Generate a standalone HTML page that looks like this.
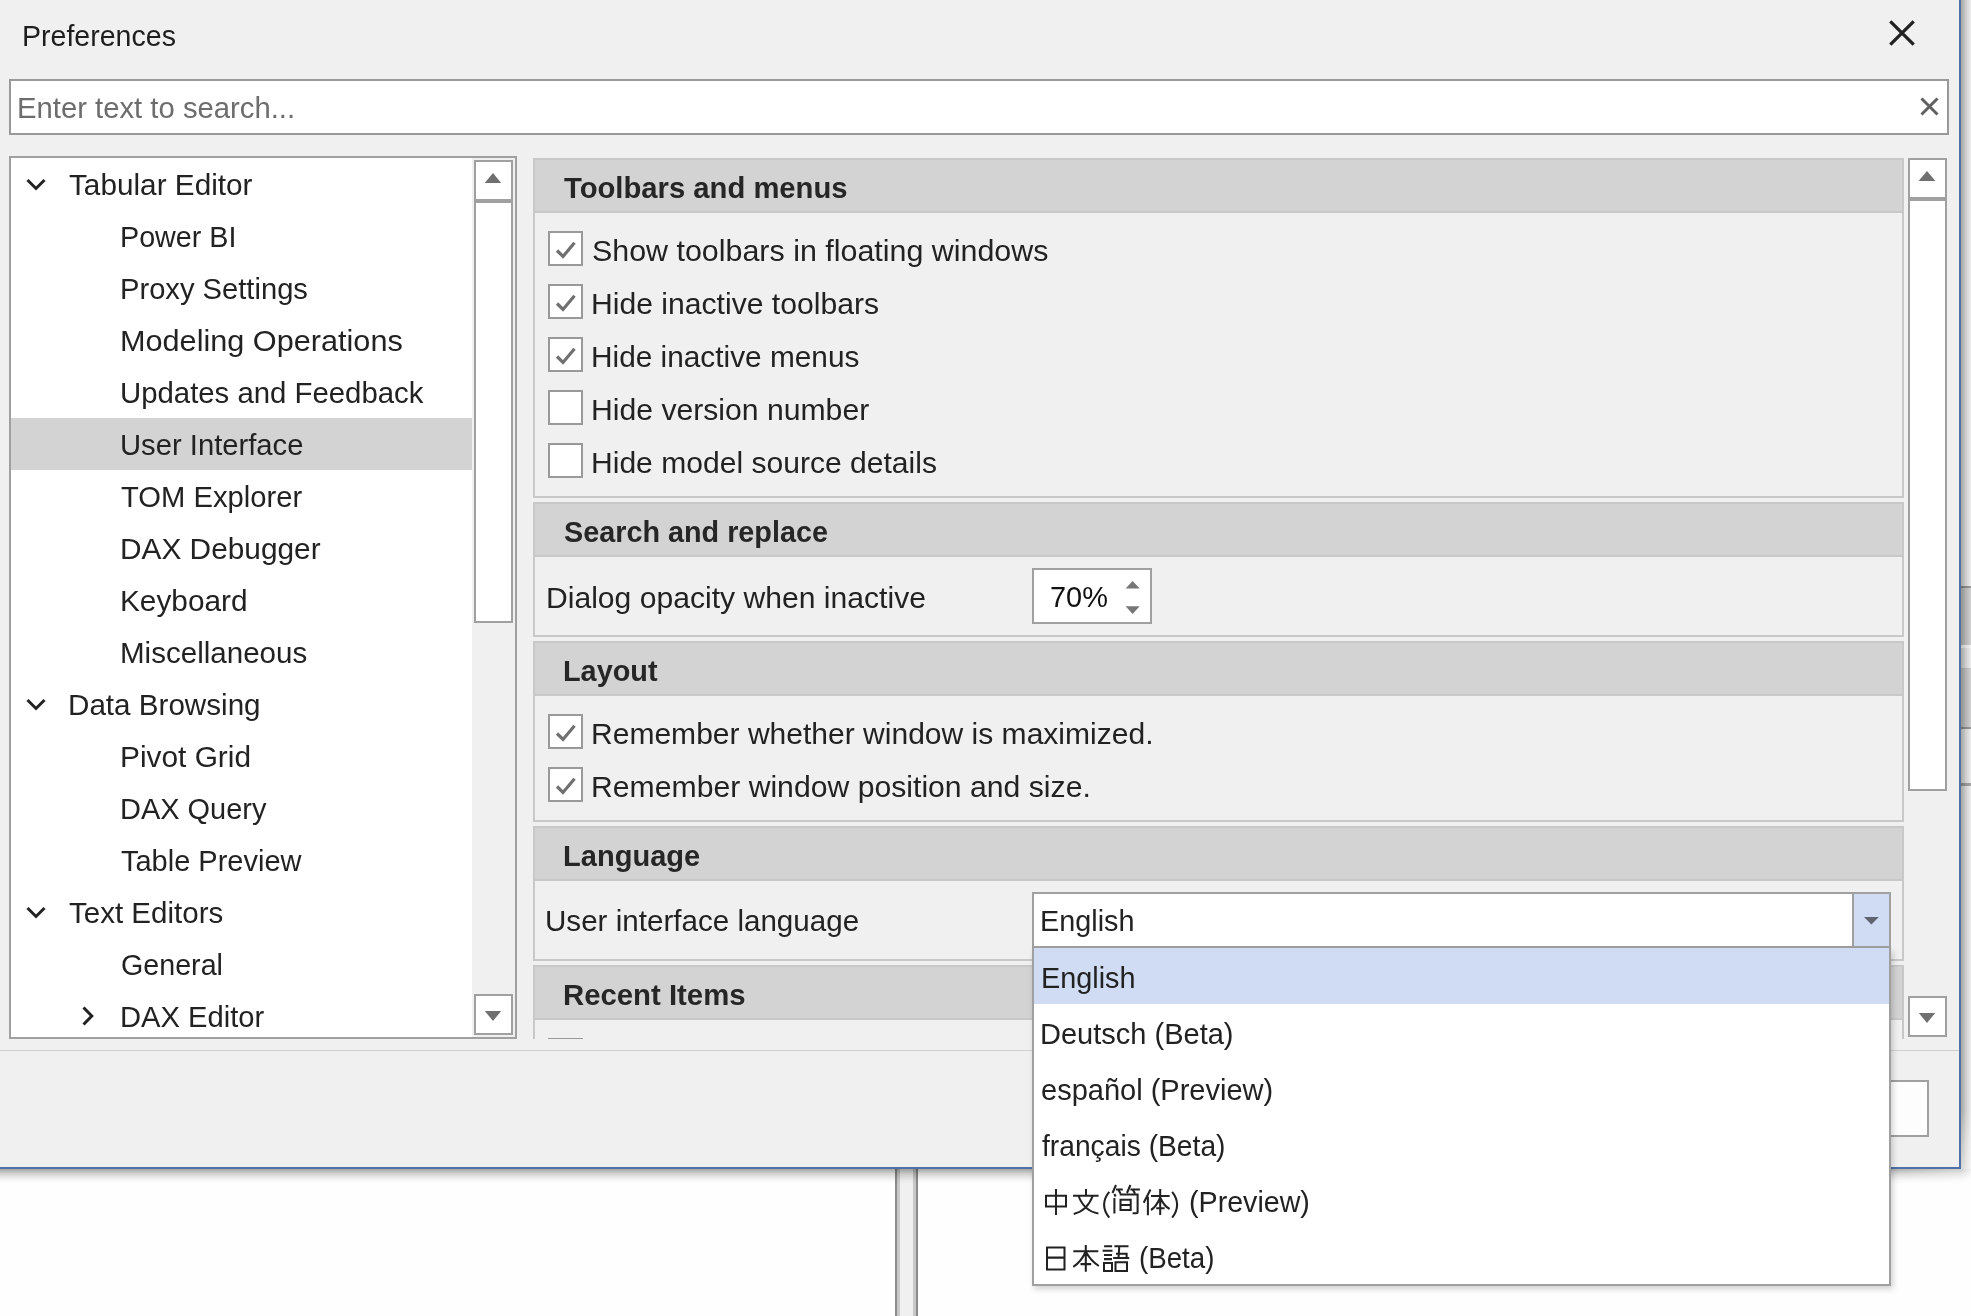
<!DOCTYPE html>
<html><head><meta charset="utf-8"><title>Preferences</title>
<style>
html,body{margin:0;padding:0;}
body{width:1971px;height:1316px;position:relative;overflow:hidden;background:#fdfdfd;font-family:"Liberation Sans",sans-serif;}
.r{position:absolute;box-sizing:content-box;}
.t{position:absolute;white-space:pre;}
</style></head><body>
<div class="r" style="left:0px;top:0px;width:1959px;height:1167px;background:#f0f0f0;"></div>
<div class="r" style="left:0px;top:1169px;width:1971px;height:147px;background:#fefefe;"></div>
<div class="r" style="left:895px;top:1169px;width:2px;height:147px;background:#8a8a8a;"></div>
<div class="r" style="left:897px;top:1169px;width:3px;height:147px;background:#c8c8c8;"></div>
<div class="r" style="left:900px;top:1169px;width:13px;height:147px;background:#f0f0f0;"></div>
<div class="r" style="left:913px;top:1169px;width:3px;height:147px;background:#c8c8c8;"></div>
<div class="r" style="left:916px;top:1169px;width:2px;height:147px;background:#8a8a8a;"></div>
<div class="r" style="left:0px;top:1169px;width:1971px;height:16px;background:linear-gradient(rgba(0,0,0,0.34) 0px,rgba(0,0,0,0.275) 2px,rgba(0,0,0,0.19) 4px,rgba(0,0,0,0.137) 6px,rgba(0,0,0,0.09) 8px,rgba(0,0,0,0.05) 10px,rgba(0,0,0,0.02) 12px,rgba(0,0,0,0) 15px);-webkit-mask-image:linear-gradient(90deg,#000 1880px,rgba(0,0,0,0.55) 1961px,rgba(0,0,0,0.15) 1971px)"></div>
<div class="r" style="left:1961px;top:0px;width:10px;height:1169px;background:linear-gradient(90deg,#a8a8a6,#bdbdbd 30%,#d0d0d0 50%,#dedede 75%,#eeeeee);-webkit-mask-image:linear-gradient(#000 1110px,rgba(0,0,0,0.45) 1169px)"></div>
<div class="r" style="left:1961px;top:586px;width:10px;height:2px;background:rgba(0,0,0,0.35);"></div>
<div class="r" style="left:1961px;top:588px;width:10px;height:57px;background:rgba(0,0,0,0.12);"></div>
<div class="r" style="left:1961px;top:645px;width:10px;height:3px;background:rgba(255,255,255,0.3);"></div>
<div class="r" style="left:1961px;top:668px;width:10px;height:1px;background:rgba(0,0,0,0.15);"></div>
<div class="r" style="left:1961px;top:669px;width:10px;height:58px;background:rgba(0,0,0,0.12);"></div>
<div class="r" style="left:1961px;top:727px;width:10px;height:2px;background:rgba(0,0,0,0.35);"></div>
<div class="r" style="left:1961px;top:783px;width:10px;height:3px;background:rgba(0,0,0,0.3);"></div>
<div class="r" style="left:1959px;top:0px;width:2px;height:1169px;background:#5070a6;"></div>
<div class="r" style="left:0px;top:1167px;width:1961px;height:2px;background:#5070a6;"></div>
<div class="t" style="left:22.12px;top:21.23px;font-size:29.5px;line-height:29.5px;font-weight:400;color:#1e1e1e;transform:scaleX(0.9678);transform-origin:0 0">Preferences</div>
<svg class="r" style="left:1880px;top:10px" width="45" height="46"><path d="M10.3 11.3 L33.7 34.7 M33.7 11.3 L10.3 34.7" stroke="#222" stroke-width="3.3" fill="none"/></svg>
<div class="r" style="left:9px;top:79px;width:1936px;height:52px;border:2px solid #999999;background:#fff;"></div>
<div class="t" style="left:16.66px;top:93.23px;font-size:29.5px;line-height:29.5px;font-weight:400;color:#6d6d6d;transform:scaleX(0.9919);transform-origin:0 0">Enter text to search...</div>
<svg class="r" style="left:1915px;top:92px" width="30" height="30"><path d="M6.5 6.5 L22.5 22.5 M22.5 6.5 L6.5 22.5" stroke="#606060" stroke-width="3" fill="none"/></svg>
<div class="r" style="left:9px;top:156px;width:504px;height:879px;border:2px solid #a0a0a0;background:#fff;"></div>
<div class="r" style="left:472px;top:158px;width:43px;height:879px;background:#f0f0f0;"></div>
<div class="r" style="left:11px;top:418px;width:461px;height:52px;background:#d3d3d3;"></div>
<div class="r" style="left:474px;top:160px;width:35px;height:459px;border:2px solid #a0a0a0;background:#fff;"></div>
<div class="r" style="left:476px;top:199px;width:35px;height:4px;background:#a0a0a0;"></div>
<svg class="r" style="left:474px;top:160px" width="39" height="40"><path d="M10.7 23 L19 13 L27.2 23 Z" fill="#707070"/></svg>
<div class="r" style="left:474px;top:994px;width:35px;height:37px;border:2px solid #a0a0a0;background:#fff;"></div>
<svg class="r" style="left:474px;top:994px" width="39" height="41"><path d="M10.8 17 L19 27 L27.2 17 Z" fill="#707070"/></svg>
<div class="r" style="left:11px;top:158px;width:461px;height:879px;overflow:hidden">
<div class="r" style="left:-11px;top:-158px;width:600px;height:1300px">
<div class="t" style="left:69.41px;top:170.23px;font-size:29.5px;line-height:29.5px;font-weight:400;color:#222222;transform:scaleX(1.0081);transform-origin:0 0">Tabular Editor</div>
<svg class="r" style="left:20px;top:158px" width="32" height="52"><path d="M7.5 22 L16 30.5 L24.5 22" stroke="#222" stroke-width="3" fill="none"/></svg>
<div class="t" style="left:120.20px;top:222.23px;font-size:29.5px;line-height:29.5px;font-weight:400;color:#222222;transform:scaleX(0.9729);transform-origin:0 0">Power BI</div>
<div class="t" style="left:120.17px;top:274.23px;font-size:29.5px;line-height:29.5px;font-weight:400;color:#222222;transform:scaleX(0.9880);transform-origin:0 0">Proxy Settings</div>
<div class="t" style="left:120.05px;top:326.23px;font-size:29.5px;line-height:29.5px;font-weight:400;color:#222222;transform:scaleX(1.0387);transform-origin:0 0">Modeling Operations</div>
<div class="t" style="left:119.80px;top:378.23px;font-size:29.5px;line-height:29.5px;font-weight:400;color:#222222;transform:scaleX(0.9947);transform-origin:0 0">Updates and Feedback</div>
<div class="t" style="left:119.61px;top:430.23px;font-size:29.5px;line-height:29.5px;font-weight:400;color:#222222;transform:scaleX(0.9900);transform-origin:0 0">User Interface</div>
<div class="t" style="left:120.92px;top:482.23px;font-size:29.5px;line-height:29.5px;font-weight:400;color:#222222;transform:scaleX(0.9897);transform-origin:0 0">TOM Explorer</div>
<div class="t" style="left:119.61px;top:534.23px;font-size:29.5px;line-height:29.5px;font-weight:400;color:#222222;transform:scaleX(1.0108);transform-origin:0 0">DAX Debugger</div>
<div class="t" style="left:119.62px;top:586.23px;font-size:29.5px;line-height:29.5px;font-weight:400;color:#222222;transform:scaleX(1.0100);transform-origin:0 0">Keyboard</div>
<div class="t" style="left:119.64px;top:638.23px;font-size:29.5px;line-height:29.5px;font-weight:400;color:#222222;transform:scaleX(1.0017);transform-origin:0 0">Miscellaneous</div>
<div class="t" style="left:67.63px;top:690.23px;font-size:29.5px;line-height:29.5px;font-weight:400;color:#222222;transform:scaleX(1.0039);transform-origin:0 0">Data Browsing</div>
<svg class="r" style="left:20px;top:678px" width="32" height="52"><path d="M7.5 22 L16 30.5 L24.5 22" stroke="#222" stroke-width="3" fill="none"/></svg>
<div class="t" style="left:119.61px;top:742.23px;font-size:29.5px;line-height:29.5px;font-weight:400;color:#222222;transform:scaleX(1.0118);transform-origin:0 0">Pivot Grid</div>
<div class="t" style="left:119.68px;top:794.23px;font-size:29.5px;line-height:29.5px;font-weight:400;color:#222222;transform:scaleX(0.9812);transform-origin:0 0">DAX Query</div>
<div class="t" style="left:120.92px;top:846.23px;font-size:29.5px;line-height:29.5px;font-weight:400;color:#222222;transform:scaleX(0.9826);transform-origin:0 0">Table Preview</div>
<div class="t" style="left:69.41px;top:898.23px;font-size:29.5px;line-height:29.5px;font-weight:400;color:#222222;transform:scaleX(1.0012);transform-origin:0 0">Text Editors</div>
<svg class="r" style="left:20px;top:886px" width="32" height="52"><path d="M7.5 22 L16 30.5 L24.5 22" stroke="#222" stroke-width="3" fill="none"/></svg>
<div class="t" style="left:120.57px;top:950.23px;font-size:29.5px;line-height:29.5px;font-weight:400;color:#222222;transform:scaleX(0.9716);transform-origin:0 0">General</div>
<div class="t" style="left:119.67px;top:1002.23px;font-size:29.5px;line-height:29.5px;font-weight:400;color:#222222;transform:scaleX(0.9883);transform-origin:0 0">DAX Editor</div>
<svg class="r" style="left:72px;top:990px" width="32" height="52"><path d="M11.5 17.5 L19.8 26 L11.5 34.5" stroke="#222" stroke-width="3" fill="none"/></svg>
</div></div>
<div class="r" style="left:533px;top:158px;width:1371px;height:881px;overflow:hidden">
<div class="r" style="left:-533px;top:-158px;width:1971px;height:1316px">
<div class="r" style="left:533px;top:158px;width:1367px;height:336px;border:2px solid #c8c8c8;background:#f0f0f0;"></div>
<div class="r" style="left:535px;top:160px;width:1367px;height:51px;background:#d3d3d3;"></div>
<div class="r" style="left:535px;top:211px;width:1367px;height:2px;background:#c8c8c8;"></div>
<div class="t" style="left:564.21px;top:174.15px;font-size:29.0px;line-height:29.0px;font-weight:700;color:#262626;transform:scaleX(1.0075);transform-origin:0 0">Toolbars and menus</div>
<div class="r" style="left:548px;top:231px;width:31px;height:31px;border:2px solid #999999;background:#fff;"></div>
<svg class="r" style="left:548px;top:231px" width="35" height="35"><path d="M9 19.5 L15 25.5 L26.5 11.8" stroke="#707070" stroke-width="3.2" fill="none"/></svg>
<div class="t" style="left:591.83px;top:236.13px;font-size:29.5px;line-height:29.5px;font-weight:400;color:#222222;transform:scaleX(1.0308);transform-origin:0 0">Show toolbars in floating windows</div>
<div class="r" style="left:548px;top:284px;width:31px;height:31px;border:2px solid #999999;background:#fff;"></div>
<svg class="r" style="left:548px;top:284px" width="35" height="35"><path d="M9 19.5 L15 25.5 L26.5 11.8" stroke="#707070" stroke-width="3.2" fill="none"/></svg>
<div class="t" style="left:590.79px;top:289.13px;font-size:29.5px;line-height:29.5px;font-weight:400;color:#222222;transform:scaleX(1.0211);transform-origin:0 0">Hide inactive toolbars</div>
<div class="r" style="left:548px;top:337px;width:31px;height:31px;border:2px solid #999999;background:#fff;"></div>
<svg class="r" style="left:548px;top:337px" width="35" height="35"><path d="M9 19.5 L15 25.5 L26.5 11.8" stroke="#707070" stroke-width="3.2" fill="none"/></svg>
<div class="t" style="left:590.82px;top:342.13px;font-size:29.5px;line-height:29.5px;font-weight:400;color:#222222;transform:scaleX(1.0105);transform-origin:0 0">Hide inactive menus</div>
<div class="r" style="left:548px;top:390px;width:31px;height:31px;border:2px solid #999999;background:#fff;"></div>
<div class="t" style="left:590.79px;top:395.13px;font-size:29.5px;line-height:29.5px;font-weight:400;color:#222222;transform:scaleX(1.0221);transform-origin:0 0">Hide version number</div>
<div class="r" style="left:548px;top:443px;width:31px;height:31px;border:2px solid #999999;background:#fff;"></div>
<div class="t" style="left:590.79px;top:448.13px;font-size:29.5px;line-height:29.5px;font-weight:400;color:#222222;transform:scaleX(1.0193);transform-origin:0 0">Hide model source details</div>
<div class="r" style="left:533px;top:502px;width:1367px;height:131px;border:2px solid #c8c8c8;background:#f0f0f0;"></div>
<div class="r" style="left:535px;top:504px;width:1367px;height:51px;background:#d3d3d3;"></div>
<div class="r" style="left:535px;top:555px;width:1367px;height:2px;background:#c8c8c8;"></div>
<div class="t" style="left:563.64px;top:518.15px;font-size:29.0px;line-height:29.0px;font-weight:700;color:#262626;transform:scaleX(0.9923);transform-origin:0 0">Search and replace</div>
<div class="t" style="left:545.79px;top:582.93px;font-size:29.5px;line-height:29.5px;font-weight:400;color:#222222;transform:scaleX(1.0207);transform-origin:0 0">Dialog opacity when inactive</div>
<div class="r" style="left:1032px;top:568px;width:116px;height:52px;border:2px solid #a0a0a0;background:#fff;"></div>
<div class="t" style="left:1049.55px;top:582.03px;font-size:29.5px;line-height:29.5px;font-weight:400;color:#111;transform:scaleX(0.9807);transform-origin:0 0">70%</div>
<svg class="r" style="left:1120px;top:575px" width="25" height="45"><path d="M5.6 13.4 L12.6 6 L19.7 13.4 Z M5.6 31.2 L12.6 39 L19.7 31.2 Z" fill="#777"/></svg>
<div class="r" style="left:533px;top:641px;width:1367px;height:177px;border:2px solid #c8c8c8;background:#f0f0f0;"></div>
<div class="r" style="left:535px;top:643px;width:1367px;height:51px;background:#d3d3d3;"></div>
<div class="r" style="left:535px;top:694px;width:1367px;height:2px;background:#c8c8c8;"></div>
<div class="t" style="left:563.33px;top:657.15px;font-size:29.0px;line-height:29.0px;font-weight:700;color:#262626;transform:scaleX(0.9946);transform-origin:0 0">Layout</div>
<div class="r" style="left:548px;top:714px;width:31px;height:31px;border:2px solid #999999;background:#fff;"></div>
<svg class="r" style="left:548px;top:714px" width="35" height="35"><path d="M9 19.5 L15 25.5 L26.5 11.8" stroke="#707070" stroke-width="3.2" fill="none"/></svg>
<div class="t" style="left:590.80px;top:719.13px;font-size:29.5px;line-height:29.5px;font-weight:400;color:#222222;transform:scaleX(1.0181);transform-origin:0 0">Remember whether window is maximized.</div>
<div class="r" style="left:548px;top:767px;width:31px;height:31px;border:2px solid #999999;background:#fff;"></div>
<svg class="r" style="left:548px;top:767px" width="35" height="35"><path d="M9 19.5 L15 25.5 L26.5 11.8" stroke="#707070" stroke-width="3.2" fill="none"/></svg>
<div class="t" style="left:590.79px;top:772.13px;font-size:29.5px;line-height:29.5px;font-weight:400;color:#222222;transform:scaleX(1.0229);transform-origin:0 0">Remember window position and size.</div>
<div class="r" style="left:533px;top:826px;width:1367px;height:131px;border:2px solid #c8c8c8;background:#f0f0f0;"></div>
<div class="r" style="left:535px;top:828px;width:1367px;height:51px;background:#d3d3d3;"></div>
<div class="r" style="left:535px;top:879px;width:1367px;height:2px;background:#c8c8c8;"></div>
<div class="t" style="left:563.31px;top:842.15px;font-size:29.0px;line-height:29.0px;font-weight:700;color:#262626;transform:scaleX(1.0024);transform-origin:0 0">Language</div>
<div class="t" style="left:545.18px;top:906.43px;font-size:29.5px;line-height:29.5px;font-weight:400;color:#222222;transform:scaleX(1.0029);transform-origin:0 0">User interface language</div>
<div class="r" style="left:533px;top:965px;width:1367px;height:231px;border:2px solid #c8c8c8;background:#f0f0f0;"></div>
<div class="r" style="left:535px;top:967px;width:1367px;height:51px;background:#d3d3d3;"></div>
<div class="r" style="left:535px;top:1018px;width:1367px;height:2px;background:#c8c8c8;"></div>
<div class="t" style="left:562.59px;top:981.15px;font-size:29.0px;line-height:29.0px;font-weight:700;color:#262626;transform:scaleX(1.0114);transform-origin:0 0">Recent Items</div>
<div class="r" style="left:548px;top:1038px;width:31px;height:31px;border:2px solid #999999;background:#fff;"></div>
</div></div>
<div class="r" style="left:1908px;top:158px;width:35px;height:629px;border:2px solid #a0a0a0;background:#fff;"></div>
<div class="r" style="left:1910px;top:197px;width:35px;height:4px;background:#a0a0a0;"></div>
<svg class="r" style="left:1908px;top:158px" width="39" height="40"><path d="M10.6 23 L19 13 L27.4 23 Z" fill="#707070"/></svg>
<div class="r" style="left:1908px;top:996px;width:35px;height:37px;border:2px solid #a0a0a0;background:#fff;"></div>
<svg class="r" style="left:1908px;top:996px" width="39" height="41"><path d="M10.8 17 L19 27 L27.2 17 Z" fill="#707070"/></svg>
<div class="r" style="left:0px;top:1050px;width:1959px;height:1px;background:#d0d0d0;"></div>
<div class="r" style="left:1700px;top:1080px;width:225px;height:53px;border:2px solid #a0a0a0;background:#fdfdfd;"></div>
<div class="r" style="left:1032px;top:892px;width:855px;height:52px;border:2px solid #a0a0a0;background:#fff;"></div>
<div class="r" style="left:1852px;top:894px;width:2px;height:52px;background:#a0a0a0;"></div>
<div class="r" style="left:1854px;top:894px;width:35px;height:52px;background:#cfdcf3;"></div>
<svg class="r" style="left:1854px;top:894px" width="35" height="52"><path d="M10 23 L17.4 30.4 L24.8 23 Z" fill="#5f6470"/></svg>
<div class="t" style="left:1039.70px;top:906.23px;font-size:29.5px;line-height:29.5px;font-weight:400;color:#222222;transform:scaleX(0.9764);transform-origin:0 0">English</div>
<div class="r" style="left:1032px;top:948px;width:855px;height:336px;border:2px solid #a0a0a0;border-top:0;background:#fff;box-shadow:2px 3px 6px rgba(0,0,0,0.18)"></div>
<div class="r" style="left:1034px;top:948px;width:855px;height:56px;background:#cfdcf3;"></div>
<div class="t" style="left:1040.69px;top:962.73px;font-size:29.5px;line-height:29.5px;font-weight:400;color:#222222;transform:scaleX(0.9775);transform-origin:0 0">English</div>
<div class="t" style="left:1039.68px;top:1018.73px;font-size:29.5px;line-height:29.5px;font-weight:400;color:#222222;transform:scaleX(0.9834);transform-origin:0 0">Deutsch (Beta)</div>
<div class="t" style="left:1040.84px;top:1074.73px;font-size:29.5px;line-height:29.5px;font-weight:400;color:#222222;transform:scaleX(0.9835);transform-origin:0 0">español (Preview)</div>
<div class="t" style="left:1041.58px;top:1130.73px;font-size:29.5px;line-height:29.5px;font-weight:400;color:#222222;transform:scaleX(0.9565);transform-origin:0 0">français (Beta)</div>
<div class="t" style="left:1188.58px;top:1186.73px;font-size:29.5px;line-height:29.5px;font-weight:400;color:#222222;transform:scaleX(0.9706);transform-origin:0 0">(Preview)</div>
<div class="t" style="left:1139.34px;top:1242.73px;font-size:29.5px;line-height:29.5px;font-weight:400;color:#222222;transform:scaleX(0.9387);transform-origin:0 0">(Beta)</div>
<svg class="r" style="left:1036px;top:1180px" width="160" height="100"><path d="M10 15.8H30V26.4H10Z M20 9V35 M50 9V15 M37 15.8H62.6 M42.6 16Q48 31 62.4 33.5 M56.7 16Q51 31 37.7 33.9 M73.2 11.8Q63 24.7 73.2 37.7 M80 5L76.5 13 M80 9.5H86.8 M82.5 10L84.5 13.5 M94.4 5L91 13 M94.4 9.5H103.9 M97 10L99 13.5 M78.4 14L79.6 16.5 M78.4 18V33.5 M83.7 14.5H101.6V32.4Q101.6 33.6 96.6 33.2 M84.5 19.8H94.7V30H84.5Z M84.5 25H94.7 M114.5 9.5L107.7 22.8 M111.9 16.7V35.3 M115 16H133.6 M124.2 9V35 M124 18Q120 27 115 30 M124.4 18Q128 26 133.6 29 M120.2 28.2H128.6 M136.2 11.8Q146 24.7 136.2 37.7 M11 67.4H28.5V89.4H11Z M11 77.6H28.5 M37.3 71.2H62.3 M49.8 65V91.7 M49.5 72Q45 82 37.3 86.8 M50 72Q55 81 62.8 86 M44.5 84.1H55.2 M68.1 66.2H76.1 M66.6 70.8H76.5 M68 75H76 M68 79.1H76 M68 83H76V91H68Z M78.4 66.2H92.5 M83.3 66.2L82.5 78 M80 73.8H90.6V79 M77.2 78H93.2 M79.5 82.2H91V91H79.5Z" stroke="#222222" stroke-width="2.05" fill="none"/></svg>
</body></html>
